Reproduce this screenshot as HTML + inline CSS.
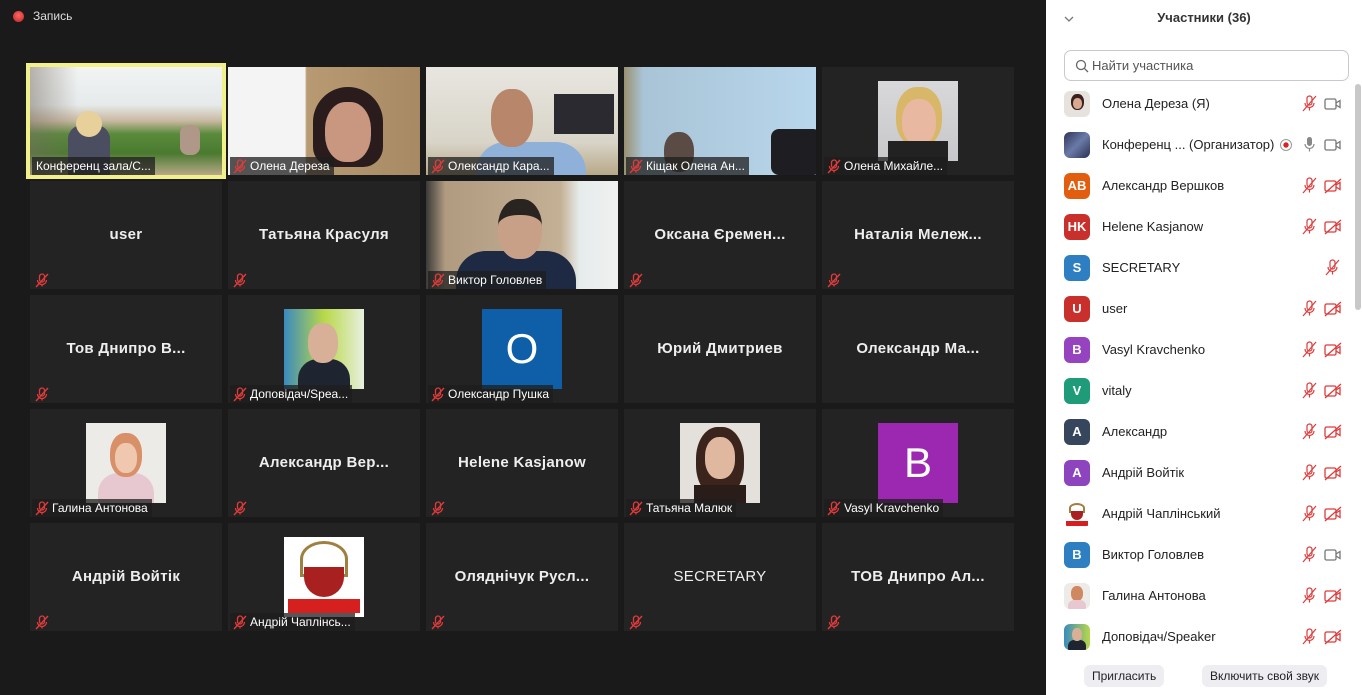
<!DOCTYPE html>
<html><head><meta charset="utf-8"><style>
*{margin:0;padding:0;box-sizing:border-box}
body{width:1362px;height:695px;background:#1a1a1a;font-family:"Liberation Sans","DejaVu Sans",sans-serif;position:relative;overflow:hidden}
.rec{position:absolute;left:13px;top:11px;width:11px;height:11px;border-radius:50%;background:radial-gradient(circle at 50% 40%,#f66,#b22)}
.rect{position:absolute;left:33px;top:9px;color:#ddd;font-size:12px}
.t{position:absolute;width:192px;height:108px;background:#232323;overflow:hidden}
.nm{position:absolute;left:0;right:0;top:45px;text-align:center;color:#eee;font-weight:bold;font-size:15px;letter-spacing:.3px}
.lb{position:absolute;left:2px;bottom:0;height:18px;background:rgba(30,30,30,.75);color:#fff;font-size:12px;line-height:18px;padding:0 4px 0 20px;white-space:nowrap}
.lb.n{padding-left:4px}
.mi{position:absolute;left:2px;bottom:0;width:18px;height:18px}
.mi svg,.lb svg{position:absolute;left:3px;top:2px}
.pic{position:absolute}
.panel{position:absolute;left:1046px;top:0;width:316px;height:695px;background:#fff}
.row{position:absolute;left:18px;height:26px;width:290px}
.av{position:absolute;left:0;top:0;width:26px;height:26px;border-radius:6px;color:#fff;font-weight:bold;font-size:13px;text-align:center;line-height:26px;overflow:hidden}
.pn{position:absolute;left:38px;top:5px;font-size:13px;color:#222;white-space:nowrap}
.ic{position:absolute;top:4px}
.btn{position:absolute;top:665px;height:22px;background:#eeeef2;border-radius:6px;font-size:12px;color:#222;line-height:22px;padding:0 8px}
</style></head><body>
<div class="rec"></div><div class="rect">Запись</div>

<svg width="0" height="0" style="position:absolute"><defs>
<g id="m"><rect x="4.5" y="1" width="5" height="8" rx="2.5" fill="none" stroke="#e03a3a" stroke-width="1.3"/><path d="M2.5 7a4.5 4.5 0 0 0 9 0M7 11.5v2" fill="none" stroke="#e03a3a" stroke-width="1.3"/><path d="M1 14L13 1" stroke="#e03a3a" stroke-width="1.4"/></g>
</defs></svg>

<!-- row 1 -->
<div class="t" style="left:26px;top:63px;width:200px;height:116px;background:#f2f08a"></div>
<div class="t" style="left:30px;top:67px;background:linear-gradient(180deg,#f2f4f4 0%,#e6eaea 35%,#c8b8a0 50%,#5a8a3a 62%,#4a7a30 80%,#b8a888 100%)">
<div class="pic" style="left:0;top:0;width:192px;height:108px;background:linear-gradient(90deg,rgba(120,110,100,.5) 0%,rgba(0,0,0,0) 25%)"></div>
<div class="pic" style="left:38px;top:58px;width:42px;height:50px;background:#4a4e60;border-radius:14px 14px 0 0"></div>
<div class="pic" style="left:46px;top:44px;width:26px;height:26px;background:#e7d09a;border-radius:50%"></div>
<div class="pic" style="left:150px;top:58px;width:20px;height:30px;background:#b09888;border-radius:8px"></div>
<div class="lb n">Конференц зала/С...</div></div>
<div class="t" style="left:228px;top:67px;background:linear-gradient(90deg,#f4f4f4 0%,#f4f4f4 40%,#b89a72 41%,#a78a64 100%)">
<div class="pic" style="left:85px;top:20px;width:70px;height:80px;background:#2a1c1c;border-radius:35px 35px 20px 20px"></div>
<div class="pic" style="left:97px;top:35px;width:46px;height:60px;background:#c99680;border-radius:45%"></div>
<div class="lb"><svg width="14" height="15"><use href="#m"/></svg>Олена Дереза</div></div>
<div class="t" style="left:426px;top:67px;background:linear-gradient(180deg,#e8e6e0,#d8d4c8 70%,#b8a888)">
<div class="pic" style="left:128px;top:27px;width:60px;height:40px;background:#2a2a30"></div>
<div class="pic" style="left:50px;top:75px;width:110px;height:40px;background:#8fb0d8;border-radius:30px 30px 0 0"></div>
<div class="pic" style="left:65px;top:22px;width:42px;height:58px;background:#b8866a;border-radius:45%"></div>
<div class="lb"><svg width="14" height="15"><use href="#m"/></svg>Олександр Кара...</div></div>
<div class="t" style="left:624px;top:67px;background:linear-gradient(90deg,#9a9070 0%,#a9c4d6 10%,#b8d6ec 100%)">
<div class="pic" style="left:147px;top:62px;width:50px;height:46px;background:#1e1e22;border-radius:8px"></div>
<div class="pic" style="left:40px;top:65px;width:30px;height:40px;background:#5a4c44;border-radius:45%"></div>
<div class="lb"><svg width="14" height="15"><use href="#m"/></svg>Кіщак Олена Ан...</div></div>
<div class="t" style="left:822px;top:67px">
<div class="pic" style="left:56px;top:14px;width:80px;height:80px;background:linear-gradient(180deg,#d8d8da,#c8c8cc)"><div style="position:absolute;left:18px;top:6px;width:46px;height:60px;background:#d8b868;border-radius:45%"></div><div style="position:absolute;left:24px;top:18px;width:34px;height:46px;background:#e8b8a0;border-radius:45%"></div><div style="position:absolute;left:10px;top:60px;width:60px;height:20px;background:#222"></div></div>
<div class="lb"><svg width="14" height="15"><use href="#m"/></svg>Олена Михайле...</div></div>

<!-- row 2 -->
<div class="t" style="left:30px;top:181px"><div class="nm">user</div><div class="mi"><svg width="14" height="15"><use href="#m"/></svg></div></div>
<div class="t" style="left:228px;top:181px"><div class="nm">Татьяна Красуля</div><div class="mi"><svg width="14" height="15"><use href="#m"/></svg></div></div>
<div class="t" style="left:426px;top:181px;background:linear-gradient(90deg,#3a3a38 0%,#b09a80 10%,#c4b094 70%,#e6ecec 80%,#f0f0f0 100%)">
<div class="pic" style="left:30px;top:70px;width:120px;height:40px;background:#1e2a44;border-radius:30px 30px 0 0"></div>
<div class="pic" style="left:72px;top:18px;width:44px;height:60px;background:#c8a088;border-radius:45%;border-top:16px solid #2a2420"></div>
<div class="lb"><svg width="14" height="15"><use href="#m"/></svg>Виктор Головлев</div></div>
<div class="t" style="left:624px;top:181px"><div class="nm">Оксана Єремен...</div><div class="mi"><svg width="14" height="15"><use href="#m"/></svg></div></div>
<div class="t" style="left:822px;top:181px"><div class="nm">Наталія Мележ...</div><div class="mi"><svg width="14" height="15"><use href="#m"/></svg></div></div>

<!-- row 3 -->
<div class="t" style="left:30px;top:295px"><div class="nm">Тов Днипро  В...</div><div class="mi"><svg width="14" height="15"><use href="#m"/></svg></div></div>
<div class="t" style="left:228px;top:295px">
<div class="pic" style="left:56px;top:14px;width:80px;height:80px;background:linear-gradient(90deg,#3a8ac0,#b8d848 50%,#e8f0e0)"><div style="position:absolute;left:14px;top:50px;width:52px;height:30px;background:#1e2430;border-radius:20px 20px 0 0"></div><div style="position:absolute;left:24px;top:14px;width:30px;height:40px;background:#d8b098;border-radius:45%"></div></div>
<div class="lb"><svg width="14" height="15"><use href="#m"/></svg>Доповідач/Spea...</div></div>
<div class="t" style="left:426px;top:295px">
<div class="pic" style="left:56px;top:14px;width:80px;height:80px;background:#0e5fa8;color:#fff;font-size:42px;text-align:center;line-height:80px">O</div>
<div class="lb"><svg width="14" height="15"><use href="#m"/></svg>Олександр Пушка</div></div>
<div class="t" style="left:624px;top:295px"><div class="nm">Юрий Дмитриев</div></div>
<div class="t" style="left:822px;top:295px"><div class="nm">Олександр  Ма...</div></div>

<!-- row 4 -->
<div class="t" style="left:30px;top:409px">
<div class="pic" style="left:56px;top:14px;width:80px;height:80px;background:#ecebe8"><div style="position:absolute;left:12px;top:50px;width:56px;height:30px;background:#e8c8d0;border-radius:20px 20px 0 0"></div><div style="position:absolute;left:24px;top:10px;width:32px;height:44px;background:#d89068;border-radius:45%"></div><div style="position:absolute;left:29px;top:20px;width:22px;height:30px;background:#f0c8b0;border-radius:45%"></div></div>
<div class="lb"><svg width="14" height="15"><use href="#m"/></svg>Галина Антонова</div></div>
<div class="t" style="left:228px;top:409px"><div class="nm">Александр  Вер...</div><div class="mi"><svg width="14" height="15"><use href="#m"/></svg></div></div>
<div class="t" style="left:426px;top:409px"><div class="nm">Helene Kasjanow</div><div class="mi"><svg width="14" height="15"><use href="#m"/></svg></div></div>
<div class="t" style="left:624px;top:409px">
<div class="pic" style="left:56px;top:14px;width:80px;height:80px;background:#e4e0dc"><div style="position:absolute;left:16px;top:4px;width:48px;height:70px;background:#3a241c;border-radius:45%"></div><div style="position:absolute;left:25px;top:14px;width:30px;height:42px;background:#e0b8a0;border-radius:45%"></div><div style="position:absolute;left:14px;top:62px;width:52px;height:18px;background:#2a1c18"></div></div>
<div class="lb"><svg width="14" height="15"><use href="#m"/></svg>Татьяна Малюк</div></div>
<div class="t" style="left:822px;top:409px">
<div class="pic" style="left:56px;top:14px;width:80px;height:80px;background:#9c27b0;color:#fff;font-size:42px;text-align:center;line-height:80px">B</div>
<div class="lb"><svg width="14" height="15"><use href="#m"/></svg>Vasyl Kravchenko</div></div>

<!-- row 5 -->
<div class="t" style="left:30px;top:523px"><div class="nm">Андрій Войтік</div><div class="mi"><svg width="14" height="15"><use href="#m"/></svg></div></div>
<div class="t" style="left:228px;top:523px">
<div class="pic" style="left:56px;top:14px;width:80px;height:80px;background:#fff"><div style="position:absolute;left:16px;top:4px;width:48px;height:36px;border:3px solid #a08040;border-radius:50% 50% 0 0"></div><div style="position:absolute;left:20px;top:30px;width:40px;height:30px;background:#a82020;border-radius:0 0 20px 20px"></div><div style="position:absolute;left:4px;top:62px;width:72px;height:14px;background:#d62020"></div></div>
<div class="lb"><svg width="14" height="15"><use href="#m"/></svg>Андрій Чаплінсь...</div></div>
<div class="t" style="left:426px;top:523px"><div class="nm">Оляднічук  Русл...</div><div class="mi"><svg width="14" height="15"><use href="#m"/></svg></div></div>
<div class="t" style="left:624px;top:523px"><div class="nm" style="font-weight:normal">SECRETARY</div><div class="mi"><svg width="14" height="15"><use href="#m"/></svg></div></div>
<div class="t" style="left:822px;top:523px"><div class="nm">ТОВ Днипро Ал...</div><div class="mi"><svg width="14" height="15"><use href="#m"/></svg></div></div>

<!-- panel -->
<div class="panel">
<svg style="position:absolute;left:18px;top:15px" width="10" height="8"><path d="M1 2l4 4 4-4" fill="none" stroke="#777" stroke-width="1.3"/></svg>
<div style="position:absolute;left:0;right:0;top:10px;text-align:center;font-weight:bold;font-size:13px;color:#333">Участники (36)</div>
<div style="position:absolute;left:18px;top:50px;width:285px;height:31px;border:1px solid #c8c8d0;border-radius:7px">
<svg style="position:absolute;left:10px;top:8px" width="14" height="14"><circle cx="6" cy="6" r="4.5" fill="none" stroke="#666" stroke-width="1.3"/><path d="M9.3 9.3L13 13" stroke="#666" stroke-width="1.3"/></svg>
<span style="position:absolute;left:27px;top:7px;font-size:13px;color:#555">Найти участника</span></div>
<div style="position:absolute;left:309px;top:84px;width:6px;height:226px;background:#c8c8c8;border-radius:3px"></div>
<svg width="0" height="0" style="position:absolute"><defs>
<g id="pm"><rect x="6" y="1" width="5" height="9" rx="2.5" fill="none" stroke="#e03a3a" stroke-width="1.2"/><path d="M4 8a4.5 4.5 0 0 0 9 0M8.5 12.5v3" fill="none" stroke="#e03a3a" stroke-width="1.2"/><path d="M2 16L15 1" stroke="#e03a3a" stroke-width="1.2"/></g>
<g id="cv"><rect x="1" y="4" width="11" height="10" rx="1.5" fill="none" stroke="#777" stroke-width="1.3"/><path d="M12 8l4-2.5v7L12 10" fill="none" stroke="#777" stroke-width="1.3"/></g>
<g id="cx"><rect x="1" y="4" width="11" height="10" rx="1.5" fill="none" stroke="#e03a3a" stroke-width="1.3"/><path d="M12 8l4-2.5v7L12 10M1 16L17 2" fill="none" stroke="#e03a3a" stroke-width="1.3"/></g>
<g id="mg"><rect x="6" y="1" width="5" height="9" rx="2.5" fill="#888"/><path d="M4 8a4.5 4.5 0 0 0 9 0M8.5 12.5v3" fill="none" stroke="#888" stroke-width="1.2"/></g>
</defs></svg>

<div class="row" style="top:91px"><div class="av" style="background:#e6e2de"><div style="position:absolute;left:7px;top:3px;width:13px;height:16px;background:#3a2020;border-radius:45%"></div><div style="position:absolute;left:9px;top:7px;width:9px;height:11px;background:#d8a890;border-radius:45%"></div></div><div class="pn">Олена Дереза (Я)</div><svg class="ic" style="left:237px" width="17" height="17"><use href="#pm"/></svg><svg class="ic" style="left:260px" width="18" height="17"><use href="#cv"/></svg></div>
<div class="row" style="top:132px"><div class="av" style="background:linear-gradient(135deg,#30345a,#6a7aa8 50%,#2a3050)"></div><div class="pn">Конференц ... (Организатор)</div><svg class="ic" style="left:215px;top:6px" width="14" height="14"><circle cx="7" cy="7" r="5.5" fill="none" stroke="#999"/><circle cx="7" cy="7" r="2.7" fill="#e02020"/></svg><svg class="ic" style="left:237px" width="17" height="17"><use href="#mg"/></svg><svg class="ic" style="left:260px" width="18" height="17"><use href="#cv"/></svg></div>
<div class="row" style="top:173px"><div class="av" style="background:#e35d0f">AB</div><div class="pn">Александр Вершков</div><svg class="ic" style="left:237px" width="17" height="17"><use href="#pm"/></svg><svg class="ic" style="left:260px" width="18" height="17"><use href="#cx"/></svg></div>
<div class="row" style="top:214px"><div class="av" style="background:#c9302c">HK</div><div class="pn">Helene Kasjanow</div><svg class="ic" style="left:237px" width="17" height="17"><use href="#pm"/></svg><svg class="ic" style="left:260px" width="18" height="17"><use href="#cx"/></svg></div>
<div class="row" style="top:255px"><div class="av" style="background:#2d7fc1">S</div><div class="pn">SECRETARY</div><svg class="ic" style="left:260px" width="17" height="17"><use href="#pm"/></svg></div>
<div class="row" style="top:296px"><div class="av" style="background:#c9302c">U</div><div class="pn">user</div><svg class="ic" style="left:237px" width="17" height="17"><use href="#pm"/></svg><svg class="ic" style="left:260px" width="18" height="17"><use href="#cx"/></svg></div>
<div class="row" style="top:337px"><div class="av" style="background:#9643c0">B</div><div class="pn">Vasyl Kravchenko</div><svg class="ic" style="left:237px" width="17" height="17"><use href="#pm"/></svg><svg class="ic" style="left:260px" width="18" height="17"><use href="#cx"/></svg></div>
<div class="row" style="top:378px"><div class="av" style="background:#1e9b78">V</div><div class="pn">vitaly</div><svg class="ic" style="left:237px" width="17" height="17"><use href="#pm"/></svg><svg class="ic" style="left:260px" width="18" height="17"><use href="#cx"/></svg></div>
<div class="row" style="top:419px"><div class="av" style="background:#36475d">A</div><div class="pn">Александр</div><svg class="ic" style="left:237px" width="17" height="17"><use href="#pm"/></svg><svg class="ic" style="left:260px" width="18" height="17"><use href="#cx"/></svg></div>
<div class="row" style="top:460px"><div class="av" style="background:#8e44bf">A</div><div class="pn">Андрій Войтік</div><svg class="ic" style="left:237px" width="17" height="17"><use href="#pm"/></svg><svg class="ic" style="left:260px" width="18" height="17"><use href="#cx"/></svg></div>
<div class="row" style="top:501px"><div class="av" style="background:#fff"><div style="position:absolute;left:5px;top:2px;width:16px;height:10px;border:2px solid #a08040;border-radius:50% 50% 0 0"></div><div style="position:absolute;left:7px;top:10px;width:12px;height:9px;background:#a82020;border-radius:0 0 6px 6px"></div><div style="position:absolute;left:2px;top:20px;width:22px;height:5px;background:#d62020"></div></div><div class="pn">Андрій Чаплінський</div><svg class="ic" style="left:237px" width="17" height="17"><use href="#pm"/></svg><svg class="ic" style="left:260px" width="18" height="17"><use href="#cx"/></svg></div>
<div class="row" style="top:542px"><div class="av" style="background:#2d7fc1">B</div><div class="pn">Виктор Головлев</div><svg class="ic" style="left:237px" width="17" height="17"><use href="#pm"/></svg><svg class="ic" style="left:260px" width="18" height="17"><use href="#cv"/></svg></div>
<div class="row" style="top:583px"><div class="av" style="background:#ecebe8"><div style="position:absolute;left:7px;top:3px;width:12px;height:15px;background:#d08860;border-radius:45%"></div><div style="position:absolute;left:4px;top:17px;width:18px;height:9px;background:#e8c8d0;border-radius:6px 6px 0 0"></div></div><div class="pn">Галина Антонова</div><svg class="ic" style="left:237px" width="17" height="17"><use href="#pm"/></svg><svg class="ic" style="left:260px" width="18" height="17"><use href="#cx"/></svg></div>
<div class="row" style="top:624px"><div class="av" style="background:linear-gradient(90deg,#3a8ac0,#b8d848)"><div style="position:absolute;left:4px;top:16px;width:18px;height:10px;background:#1e2430;border-radius:6px 6px 0 0"></div><div style="position:absolute;left:8px;top:4px;width:10px;height:13px;background:#d8b098;border-radius:45%"></div></div><div class="pn">Доповідач/Speaker</div><svg class="ic" style="left:237px" width="17" height="17"><use href="#pm"/></svg><svg class="ic" style="left:260px" width="18" height="17"><use href="#cx"/></svg></div>

<div class="btn" style="left:38px">Пригласить</div>
<div class="btn" style="left:156px">Включить свой звук</div>
</div>
</body></html>
